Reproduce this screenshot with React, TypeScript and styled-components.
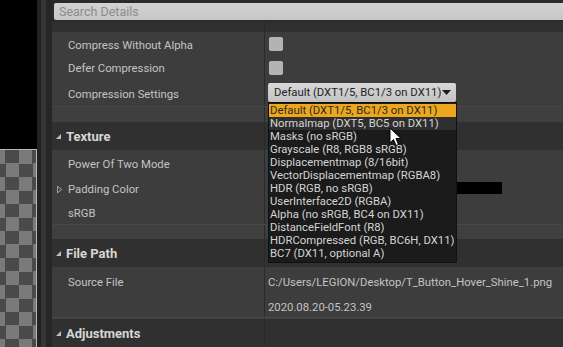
import React from 'react';
import styled, { createGlobalStyle } from 'styled-components';

const GlobalStyle = createGlobalStyle`
  html, body {
    margin: 0;
    padding: 0;
    background: #262626;
    overflow: hidden;
  }
  body {
    font-family: Roboto, "Liberation Sans", Arial, sans-serif;
  }
`;

const Screen = styled.div`
  display: flex;
  width: 563px;
  height: 347px;
  overflow: hidden;
`;

const Viewport = styled.div`
  flex: 0 0 37px;
  display: flex;
  flex-direction: column;
`;

const ViewportTop = styled.div`
  flex: 0 0 149px;
  background: #000;
`;

const Checker = styled.div`
  flex: 1;
  box-sizing: border-box;
  border-top: 1px solid #b8b8b8;
  border-right: 1px solid #b8b8b8;
  background-color: #7a7a7a;
  background-image: conic-gradient(#4a4a4a 25%, transparent 0 50%, #4a4a4a 0 75%, transparent 0);
  background-size: 27px 27px;
  background-position: -8px 0;
`;

const Splitter = styled.div`
  flex: 0 0 15px;
  display: flex;
`;

const Strip = styled.div<{ $w: number; $c: string }>`
  flex: 0 0 ${p => p.$w}px;
  background: ${p => p.$c};
`;

const Details = styled.div`
  flex: 1;
  display: flex;
  flex-direction: column;
  min-width: 0;
  background: #2b2b2b;
`;

const SearchBar = styled.div`
  padding: 3px 0 2px 2px;
  height: 17px;
`;

const SearchInput = styled.div`
  height: 17px;
  background: linear-gradient(#d2d2d2, #c6c6c6);
  border-radius: 2px 0 0 2px;
  color: #8c8c8c;
  font-size: 12.5px;
  line-height: 17px;
  padding-left: 5px;
`;

const Grid = styled.div<{ $h: number; $bg: string }>`
  display: grid;
  grid-template-columns: 212px 1fr;
  height: ${p => p.$h}px;
  background: ${p => p.$bg};
  box-sizing: border-box;
`;

const LabelCell = styled.div<{ $bold?: boolean }>`
  display: flex;
  align-items: center;
  padding-left: ${p => (p.$bold ? 4 : 5)}px;
  padding-top: ${p => (p.$bold ? 2 : 4)}px;
  gap: ${p => (p.$bold ? 5 : 6)}px;
  color: ${p => (p.$bold ? '#d6d6d6' : '#c4c4c4')};
  font-size: ${p => (p.$bold ? 13 : 11.3)}px;
  font-weight: ${p => (p.$bold ? 700 : 400)};
  white-space: nowrap;
`;

const ArrowSlot = styled.div`
  width: 5px;
  display: flex;
  align-items: center;
`;

const ValueCell = styled.div<{ $text?: boolean }>`
  position: relative;
  display: flex;
  align-items: center;
  border-left: 1px solid #2a2a2a;
  padding-left: 3px;
  padding-top: ${p => (p.$text ? 4 : 0)}px;
  color: #c4c4c4;
  font-size: 11.3px;
  white-space: nowrap;
`;

const SpacerBar = styled(Grid)`
  border-top: 1px solid #474747;
`;

const Checkbox = styled.div`
  width: 14px;
  height: 14px;
  margin-left: 1px;
  margin-top: 2px;
  border-radius: 2px;
  background: #b3b3b3;
`;

const Swatch = styled.div`
  width: 234px;
  height: 12px;
  margin-top: 2px;
  background: #000;
`;

const ComboWrap = styled.div`
  position: relative;
`;

const ComboButton = styled.div`
  width: 188px;
  height: 19px;
  box-sizing: border-box;
  display: flex;
  align-items: center;
  justify-content: space-between;
  padding: 0 5px 0 6px;
  border-radius: 2px;
  background: linear-gradient(#d8d8d8, #c2c2c2);
  color: #1e1e1e;
  font-size: 11.3px;
`;

const Menu = styled.div`
  position: absolute;
  z-index: 10;
  top: 100%;
  left: 0;
  width: 189px;
  box-sizing: border-box;
  padding: 1px 0 2px;
  background: #1b1b1b;
  border: 1px solid #111;
`;

const MenuItem = styled.div<{ $state?: 'selected' | 'hover' }>`
  height: 13px;
  line-height: 13px;
  padding-left: 1px;
  font-size: 11.3px;
  white-space: nowrap;
  color: ${p => (p.$state === 'selected' ? '#2a2a2a' : '#d4d4d4')};
  background: ${p =>
    p.$state === 'selected' ? '#eda71c' : p.$state === 'hover' ? '#2e2e2e' : 'transparent'};
`;

const Cursor = styled.svg`
  position: absolute;
  left: 120px;
  top: 24px;
`;

const ExpandedArrow = () => (
  <svg width="5" height="5" viewBox="0 0 5 5">
    <polygon points="5,0 5,5 0,5" fill="#bdbdbd" />
  </svg>
);

const CollapsedArrow = () => (
  <svg width="6" height="9" viewBox="0 0 6 9">
    <polygon points="0.5,0.5 5.5,4.5 0.5,8.5" fill="none" stroke="#bdbdbd" strokeWidth="1" />
  </svg>
);

const Header: React.FC<{ title?: string; h?: number }> = ({ title, h = 29 }) => (
  <Grid $h={h} $bg="#303030">
    <LabelCell $bold>
      {title && (
        <ArrowSlot>
          <ExpandedArrow />
        </ArrowSlot>
      )}
      {title}
    </LabelCell>
    <ValueCell />
  </Grid>
);

const Row: React.FC<{
  label: string;
  h?: number;
  collapsible?: boolean;
  text?: boolean;
  children?: React.ReactNode;
}> = ({ label, h = 25, collapsible, text, children }) => (
  <Grid $h={h} $bg="#3d3d3d">
    <LabelCell>
      <ArrowSlot>{collapsible && <CollapsedArrow />}</ArrowSlot>
      {label}
    </LabelCell>
    <ValueCell $text={text}>{children}</ValueCell>
  </Grid>
);

const Spacer: React.FC<{ h: number }> = ({ h }) => (
  <SpacerBar $h={h} $bg="#3f3f3f">
    <div />
    <ValueCell />
  </SpacerBar>
);

const options = [
  'Default (DXT1/5, BC1/3 on DX11)',
  'Normalmap (DXT5, BC5 on DX11)',
  'Masks (no sRGB)',
  'Grayscale (R8, RGB8 sRGB)',
  'Displacementmap (8/16bit)',
  'VectorDisplacementmap (RGBA8)',
  'HDR (RGB, no sRGB)',
  'UserInterface2D (RGBA)',
  'Alpha (no sRGB, BC4 on DX11)',
  'DistanceFieldFont (R8)',
  'HDRCompressed (RGB, BC6H, DX11)',
  'BC7 (DX11, optional A)',
];

const App: React.FC = () => {
  return (
    <>
      <GlobalStyle />
      <Screen>
        <Viewport>
          <ViewportTop />
          <Checker />
        </Viewport>
        <Splitter>
          <Strip $w={4} $c="#222" />
          <Strip $w={5} $c="#363636" />
          <Strip $w={6} $c="#262626" />
        </Splitter>
        <Details>
          <SearchBar>
            <SearchInput>Search Details</SearchInput>
          </SearchBar>
          <Header h={10} />
          <Row label="Compress Without Alpha" h={24}>
            <Checkbox />
          </Row>
          <Row label="Defer Compression" h={24}>
            <Checkbox />
          </Row>
          <Row label="Compression Settings" h={28}>
            <ComboWrap>
              <ComboButton>
                Default (DXT1/5, BC1/3 on DX11)
                <svg width="9" height="5" viewBox="0 0 9 5">
                  <polygon points="0,0 9,0 4.5,5" fill="#1e1e1e" />
                </svg>
              </ComboButton>
              <Menu>
                {options.map((o, i) => (
                  <MenuItem key={o} $state={i === 0 ? 'selected' : i === 1 ? 'hover' : undefined}>
                    {o}
                  </MenuItem>
                ))}
                <Cursor width="13" height="20" viewBox="0 0 13 20">
                  <path
                    d="M1 1 L1 16 L4.5 12.5 L7 18.5 L9.5 17.5 L7 11.5 L12 11.5 Z"
                    fill="#fff"
                    stroke="#000"
                    strokeWidth="1"
                    strokeLinejoin="round"
                  />
                </Cursor>
              </Menu>
            </ComboWrap>
          </Row>
          <Spacer h={16} />
          <Header title="Texture" />
          <Row label="Power Of Two Mode" h={26} />
          <Row label="Padding Color" collapsible>
            <Swatch />
          </Row>
          <Row label="sRGB" />
          <Spacer h={15} />
          <Header title="File Path" />
          <Row label="Source File" h={27} text>
            C:/Users/LEGION/Desktop/T_Button_Hover_Shine_1.png
          </Row>
          <Row label="" h={24} text>
            2020.08.20-05.23.39
          </Row>
          <Spacer h={2} />
          <Header title="Adjustments" />
        </Details>
      </Screen>
    </>
  );
};

export default App;
